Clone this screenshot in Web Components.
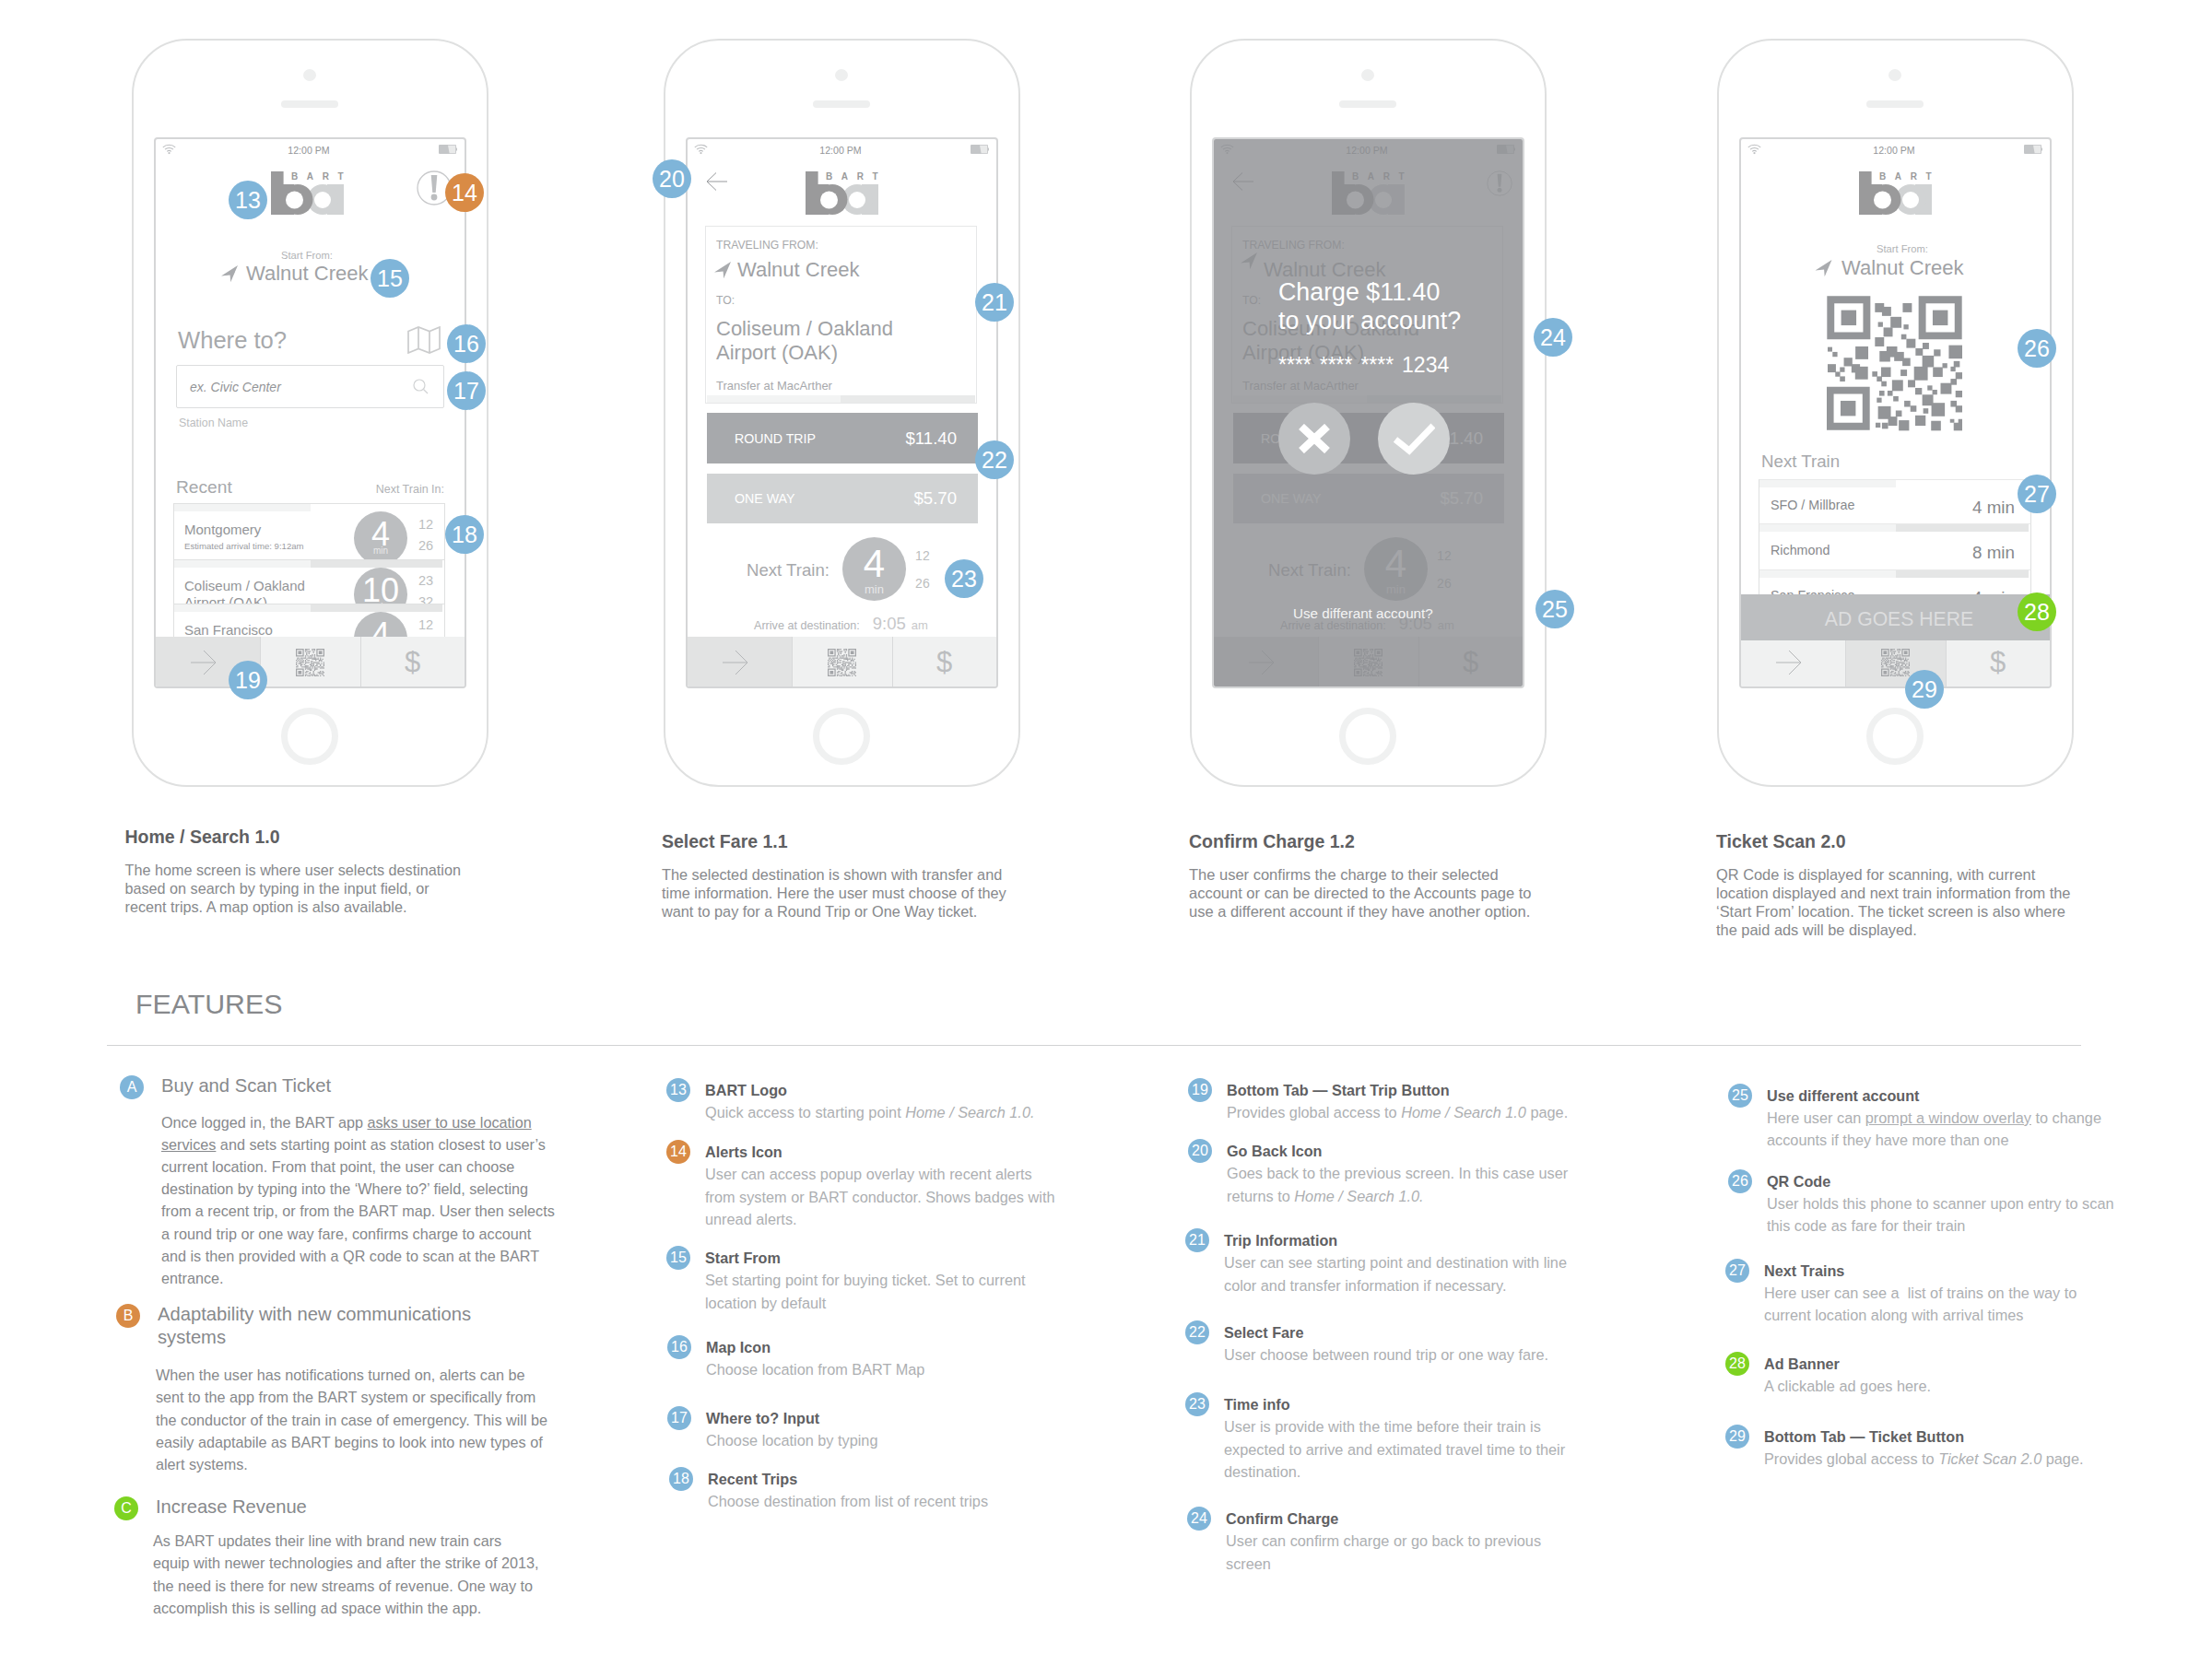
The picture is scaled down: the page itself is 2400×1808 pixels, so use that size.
<!DOCTYPE html>
<html lang="en">
<head>
<meta charset="utf-8">
<title>BART app wireframes</title>
<style>
html,body{margin:0;padding:0;background:#fff}
body{width:2400px;height:1808px;overflow:hidden;font-family:"Liberation Sans",Arial,sans-serif;color:#808285}
</style>
</head>
<body>
<wire-board></wire-board>
<script>
const FONT='"Liberation Sans",Arial,sans-serif';
function def(name, css, html){
  customElements.define(name, class extends HTMLElement{
    connectedCallback(){
      if(this.shadowRoot) return;
      const r=this.attachShadow({mode:'open'});
      r.innerHTML='<style>'+css+'</style>'+(typeof html==='function'?html(this):html);
    }
  });
}
const a=(el,n,d='')=>el.hasAttribute(n)?el.getAttribute(n):d;

/* ---------- small parts ---------- */
def('num-badge',`:host{display:flex;align-items:center;justify-content:center;width:var(--d,42px);height:var(--d,42px);border-radius:50%;background:var(--bg,#7fb5d9);color:#fff;font:var(--f,24.5px) ${FONT};flex:none;box-sizing:border-box}`,
  e=>`<slot></slot>`);
def('pin-badge',`:host{position:absolute;z-index:5;width:42px;height:42px;margin:-21px 0 0 -21px;border-radius:50%;display:flex;align-items:center;justify-content:center;color:#fff;font:25px ${FONT};background:#7fb5d9}
:host([tone=orange]){background:#d98b45}:host([tone=green]){background:#7ed321}`,`<slot></slot>`);

def('bart-logo',`:host{display:block;width:79px;height:47px;flex:none}svg{display:block}text{font:bold 10px ${FONT};letter-spacing:9.6px;fill:#9a9a9b}`,
`<svg width="79" height="47" viewBox="0 0 79 47">
<rect x="61" y="14" width="18" height="33" fill="#d1d3d4"/>
<circle cx="56" cy="30.5" r="16.5" fill="#d1d3d4"/><circle cx="56" cy="31" r="9" fill="#fff"/>
<rect x="0" y="0" width="13.6" height="47" fill="#9a9a9b"/>
<circle cx="29" cy="30.5" r="16.5" fill="#9a9a9b"/><rect x="10" y="14" width="15" height="33" fill="#9a9a9b"/><circle cx="25.5" cy="31" r="9.5" fill="#fff"/>
<text x="22" y="9">BART</text></svg>`);

def('app-status',`:host{display:flex;align-items:center;justify-content:space-between;height:24px;padding:0 8px 0 7px;box-sizing:border-box;position:relative;font:10.6px ${FONT};color:#939598}
span{transform:translate(1.5px,0)}svg{display:block}`,
`<svg width="15" height="12" viewBox="0 0 15 12" fill="none" stroke="#bcbec0" stroke-width="1.1" style="margin-top:-2px"><path d="M.8 3.8c3.6-3.4 9.8-3.4 13.4 0M3 6.2c2.4-2.2 6.6-2.2 9 0M5.2 8.4c1.2-1 3.4-1 4.6 0"/><path d="M6 10l1.5-1 1.5 1-1.5 1.2z" fill="#bcbec0" stroke="none"/></svg>
<span><slot>12:00 PM</slot></span>
<svg width="20" height="10" viewBox="0 0 20 10" style="margin-top:-2px"><path d="M1 0h17a1 1 0 0 1 1 1v2.5h1v3h-1V9a1 1 0 0 1-1 1H1a1 1 0 0 1-1-1V1a1 1 0 0 1 1-1z" fill="#c4c6c8"/><path d="M10 .8h8.2v8.4h-6.6z" fill="#e9eaea"/></svg>`);

def('nav-arrow',`:host{display:block;flex:none;width:18px;height:18px}svg{display:block}`,
`<svg width="100%" height="100%" viewBox="0 0 18 18"><path d="M18 0L0 11.6l9.6-1 .6 7.6z" fill="#a9abae"/></svg>`);
def('alert-icon',`:host{display:block;flex:none;width:var(--s,38px);height:var(--s,38px)}svg{display:block}`,
`<svg width="100%" height="100%" viewBox="0 0 38 38"><circle cx="19" cy="19" r="18" fill="none" stroke="#c8c9cb" stroke-width="1.3"/><path d="M15.7 5h6.6l-1.6 19h-3.4z" fill="#bcbec0"/><circle cx="19" cy="29" r="3.4" fill="#bcbec0"/></svg>`);
def('map-icon',`:host{display:block;flex:none;width:36px;height:30px}svg{display:block}`,
`<svg width="36" height="30" viewBox="0 0 36 30" fill="none" stroke="#cbcccd" stroke-width="1.7" stroke-linejoin="miter"><path d="M1 5.5L12 1l12 4.5L35 1v23.5L24 29l-12-4.5L1 29zM12 1v23.5M24 5.5V29"/></svg>`);
def('back-arrow',`:host{display:block;flex:none;width:24px;height:22px}svg{display:block}`,
`<svg width="24" height="22" viewBox="0 0 24 22" fill="none" stroke="#97999c" stroke-width="1"><path d="M23 11H1M11 1.500L1 11l10 9.500"/></svg>`);

const QRB=[[282,88,30,30],[305,100,30,30],[373,88,30,30],[292,150,16,16],[333,133,36,36],[310,168,30,30],[376,158,16,16],[282,200,30,30],[368,190,17,17],[385,205,30,30],[438,218,21,21],[127,232,15,15],[143,248,16,16],[218,230,42,42],[320,230,35,35],[297,245,35,35],[345,248,32,30],[372,268,26,26],[415,236,24,24],[475,240,22,22],[524,226,44,44],[437,260,38,38],[180,267,28,28],[205,288,28,28],[217,296,42,42],[127,288,27,27],[167,298,16,16],[152,313,16,16],[167,328,17,17],[273,312,17,17],[288,328,17,17],[303,344,17,17],[302,298,32,32],[366,306,21,21],[410,296,45,45],[472,298,32,32],[503,285,16,16],[530,296,16,16],[540,278,20,20],[546,315,22,22],[530,336,20,20],[338,340,36,36],[390,340,24,24],[414,366,22,22],[454,358,16,16],[470,372,16,16],[497,350,36,36],[546,375,22,22],[296,375,17,17],[323,375,17,17],[288,398,16,16],[342,393,17,17],[437,388,36,36],[378,408,20,20],[398,424,20,20],[530,408,20,20],[546,424,22,22],[292,426,42,42],[350,440,20,20],[440,433,17,17],[467,415,44,44],[325,460,30,30],[284,480,16,16],[305,480,20,20],[360,472,34,34],[414,456,34,34],[466,474,32,32],[528,468,14,12],[555,468,13,13],[540,480,28,26]];
function finder(x,y,u){return `<path fill-rule="evenodd" d="M${x} ${y}h${u}v${u}h-${u}zM${x+u*.168} ${y+u*.168}v${u*.664}h${u*.664}v-${u*.664}z"/><rect x="${x+u*.325}" y="${y+u*.325}" width="${u*.35}" height="${u*.35}"/>`}
def('qr-code',`:host{display:block;flex:none;width:147px;height:147px}svg{display:block}`,
`<svg width="147" height="147" viewBox="124 65 444 442" fill="#939598">${finder(125,65,142)}${finder(425,65,142)}${finder(123,362,142)}${QRB.map(b=>`<rect x="${b[0]}" y="${b[1]}" width="${b[2]}" height="${b[3]}"/>`).join('')}</svg>`);
function miniQR(){
  let s='',n=25,seed=7;
  const inF=(x,y)=>(x<8&&y<8)||(x>=n-8&&y<8)||(x<8&&y>=n-8);
  for(let y=0;y<n;y++)for(let x=0;x<n;x++){seed=(seed*1103515245+12345)&0x7fffffff;if(!inF(x,y)&&((seed>>16)&1))s+=`<rect x="${x}" y="${y}" width="1" height="1"/>`;}
  const f=(x,y)=>`<path fill-rule="evenodd" d="M${x} ${y}h7v7h-7zM${x+1} ${y+1}v5h5v-5z"/><rect x="${x+2}" y="${y+2}" width="3" height="3"/>`;
  return `<svg width="31" height="30" viewBox="0 0 25 25" preserveAspectRatio="none" fill="#a3a5a8">${f(0,0)}${f(18,0)}${f(0,18)}${s}</svg>`;
}
const MINI=miniQR();

def('tab-bar',`:host{display:grid;grid-template-columns:113px 109px 113px;height:54px;margin-top:auto;background:#f0f1f1;flex:none;position:relative}
div{display:flex;align-items:center;justify-content:center;box-sizing:border-box;padding-top:2px}
div+div{border-left:1.5px solid #d8d9da}
.on{background:#e2e3e3}
.one{padding-right:10px}
.two{padding-right:1.5px}
.d{font:31px ${FONT};color:#bcbec0;padding-right:1px}
svg{display:block}`,
e=>{const on=+a(e,'active','0');return `
<div class="one ${on==0?'on':''}"><svg width="28" height="28" viewBox="0 0 28 28" fill="none" stroke="#b3b5b7"><path d="M0 14h27M14 1l13 13-13 13"/></svg></div>
<div class="two ${on==1?'on':''}">${MINI}</div>
<div class="d ${on==2?'on':''}">$</div>`});

/* ---------- phone ---------- */
def('phone-frame',`:host{display:flex;flex-direction:column;align-items:center;flex:none;position:relative;width:387px;height:812px;box-sizing:border-box;border:2px solid #dfe0e0;border-radius:60px;padding-top:31px;background:#fff}
.cam{width:14px;height:13px;border-radius:50%;background:#eeefef;margin-right:1px}
.spk{width:62px;height:8px;border-radius:4px;background:#eeefef;margin:21px 1px 0 0}
.scr{margin-top:32px;width:339px;height:598px;box-sizing:border-box;border:2px solid #d5d6d7;border-radius:4px;overflow:hidden;position:relative;display:flex;flex-direction:column;background:#fff}
.home{margin:21px 1px 0 0;width:62px;height:62px;border-radius:50%;border:7px solid #f0f1f1;box-sizing:border-box}`,
`<div class="cam"></div><div class="spk"></div><div class="scr"><slot></slot></div><div class="home"></div><slot name="pins"></slot>`);

/* ---------- list rows ---------- */
const STRIPE=`.st{height:8px;background:linear-gradient(to right,#f3f4f4 0,#f3f4f4 50.5%,#e5e6e6 50.5%,#e5e6e6 99.4%,#fff 99.4%);flex:none}
:host([first]) .st{background:linear-gradient(to right,#f3f4f4 0,#f3f4f4 50.5%,#fff 50.5%)}`;
def('recent-row',`:host{display:block;overflow:hidden;box-sizing:border-box;border-left:1px solid #dfe0e0;border-right:1px solid #dfe0e0;border-top:1px solid #e0e1e1;flex:none}
${STRIPE}
.g{display:grid;grid-template-columns:184px 58px 40px;padding-left:11px}
.nm{font:15px/18px ${FONT};color:#939598;padding-top:11px;white-space:nowrap}
.sub{font:9.6px/14px ${FONT};color:#9a9c9f;margin-top:2px}
.c{width:58px;height:58px;border-radius:50%;background:#bcbec0;color:#fff;text-align:center}
.n{font:36px/30px ${FONT};padding-top:10px;color:#fff}
.m{font:10px/12px ${FONT};margin-top:-3px;color:#e8e8e9}
.t{font:14.5px/23px ${FONT};color:#bcbec0;text-align:center;padding-top:3px}`,
e=>`<div class="st"></div><div class="g"><div class="nm">${a(e,'name')}<div class="sub">${a(e,'sub')}</div></div>
<div class="c"><div class="n">${a(e,'n')}</div><div class="m">min</div></div>
<div class="t">${a(e,'t1')}<br>${a(e,'t2')}</div></div>`);
def('train-row',`:host{display:block;overflow:hidden;box-sizing:border-box;border-left:1px solid #dfe0e0;border-right:1px solid #dfe0e0;border-top:1px solid #e8e9e9;flex:none}
${STRIPE}
.g{display:flex;justify-content:space-between;align-items:flex-start;padding:var(--p,9px) 17px 0 12px}
.nm{font:14.3px/20px ${FONT};color:#87898c}
.m{font:18.8px/24px ${FONT};color:#87898c;margin-top:1px}`,
e=>`<div class="st"></div><div class="g"><div class="nm">${a(e,'name')}</div><div class="m">${a(e,'min')}</div></div>`);

/* ---------- screens ---------- */
const HEAD=`.top{display:flex;align-items:flex-start;margin-top:11px;height:47px;flex:none}
.from{font:11.2px/14px ${FONT};color:#b1b3b6}
.wc{display:flex;align-items:center;font:22px/26px ${FONT};color:#a0a2a5;gap:9px}`;
def('home-screen',`:host{display:flex;flex-direction:column;height:100%}
${HEAD}
.where{display:flex;align-items:center;justify-content:space-between;margin:44px 26px 0 24px;font:25.6px/30px ${FONT};color:#a7a9ac}
.inp{margin:12px 0 0 22px;width:291px;height:47px;box-sizing:border-box;border:1.3px solid #dcddde;border-radius:2px;display:flex;align-items:center;justify-content:space-between;padding:0 16px 0 14px;font:italic 14px ${FONT};color:#939598}
.lbl{margin:8px 0 0 25px;font:12.4px/16px ${FONT};color:#bcbec0}
.rec{margin:50px 0 0 22px;width:291px;display:flex;justify-content:space-between;align-items:baseline;font:19.2px/24px ${FONT};color:#a7a9ac}
.rec span{font:12.5px ${FONT};color:#b1b3b6}
.list{margin:5px 0 0 19px;width:295px;flex:1;min-height:0;overflow:hidden;display:flex;flex-direction:column}
svg{display:block}`,
`<app-status></app-status>
<div class="top" style="padding-left:125px"><bart-logo></bart-logo><alert-icon style="margin:-1px 0 0 79px"></alert-icon></div>
<div class="from" style="margin:37px 0 0 136px">Start From:</div>
<div class="wc" style="margin:0 0 0 71px"><nav-arrow></nav-arrow>Walnut Creek</div>
<div class="where">Where to?<map-icon></map-icon></div>
<div class="inp">ex. Civic Center<svg width="17" height="17" viewBox="0 0 17 17" fill="none" stroke="#d1d3d4" stroke-width="1.2"><circle cx="7" cy="7" r="6"/><path d="M11.500 11.500L16 16"/></svg></div>
<div class="lbl">Station Name</div>
<div class="rec">Recent<span>Next Train In:</span></div>
<div class="list">
<recent-row first style="height:61px" name="Montgomery" sub="Estimated arrival time: 9:12am" n="4" t1="12" t2="26"></recent-row>
<recent-row style="height:48px" name="Coliseum / Oakland<br>Airport (OAK)" n="10" t1="23" t2="32"></recent-row>
<recent-row style="height:60px" name="San Francisco" n="4" t1="12" t2="26"></recent-row>
</div>
<tab-bar active="0"></tab-bar>`);

def('fare-screen',`:host{display:flex;flex-direction:column;height:100%;position:relative}
${HEAD}
.card{margin:12px 0 0 19px;width:295px;height:193px;box-sizing:border-box;border:1.3px solid #e6e7e8;display:flex;flex-direction:column;font:12.2px/14px ${FONT};color:#a7a9ac}
.card>div{padding-left:11px}
.big{font:22px/26px ${FONT};color:#a0a2a5;margin-top:11px}
.st{margin:2px 1px 0;padding:0!important;height:8px;background:linear-gradient(to right,#f3f4f4 0,#f3f4f4 50%,#e9eaea 50%);flex:none}
.fare{margin-left:21px;width:294px;height:55px;box-sizing:border-box;padding:0 23px 0 30px;display:flex;justify-content:space-between;align-items:center;color:#fff;font:14.200px ${FONT};flex:none}
.fare b{font:18.600px ${FONT}}
.next{display:flex;align-items:center;margin:15px 0 0 var(--nx,64px);height:69px;flex:none;font:18.600px ${FONT};color:#a7a9ac}
.lab{padding-top:2px}
.c{margin-left:14px;width:69px;height:69px;border-radius:50%;background:#bcbec0;color:#fff;text-align:center;flex:none}
.c .n{font:42px/38px ${FONT};padding-top:10px}
.c .m{font:13px/14px ${FONT};margin-top:2px;color:#e8e8e9}
.t{margin-left:6px;width:24px;font:14px/30px ${FONT};color:#bcbec0;text-align:center}
.arr{display:flex;align-items:baseline;margin:14px 0 0 72px;font:12.600px/20px ${FONT};color:#b1b3b6;flex:none;height:20px;overflow:visible}
.arr b{font:18.500px ${FONT};color:#c7c8ca;margin-left:14px}
.arr i{font:normal 13px ${FONT};color:#c7c8ca;margin-left:6px}`,
e=>`<app-status></app-status>
<div class="top"><back-arrow style="margin:0 0 0 20px"></back-arrow><bart-logo style="margin-left:84px"></bart-logo>${e.hasAttribute('alert')?'<alert-icon style="--s:28px;margin:-1px 0 0 89px"></alert-icon>':''}</div>
<div class="card">
<div style="margin-top:13px">TRAVELING FROM:</div>
<div class="wc" style="margin-top:7px"><nav-arrow style="margin-left:-2px;transform:translateY(${a(e,'ay','0')}px)"></nav-arrow><span style="margin-left:-2px">Walnut Creek</span></div>
<div style="margin-top:13px">TO:</div>
<div class="big">Coliseum / Oakland<br>Airport (OAK)</div>
<div style="margin-top:15px;font-size:13px;line-height:16px">Transfer at MacArther</div>
<div class="st"></div>
</div>
<div class="fare" style="margin-top:10px;background:#a7a9ac"><span>ROUND TRIP</span><b>$11.40</b></div>
<div class="fare" style="margin-top:11px;height:54px;background:#d1d3d4"><span>ONE WAY</span><b>$5.70</b></div>
<div class="next" style="--nx:${a(e,'nx','64')}px"><span class="lab">Next Train:</span><div class="c"><div class="n">4</div><div class="m">min</div></div><div class="t">12<br>26</div></div>
<div class="arr">Arrive at destination:<b>9:05</b><i>am</i></div>
<tab-bar active="0"></tab-bar>
<slot></slot>`);

def('charge-overlay',`:host{position:absolute;inset:0;z-index:3;background:rgba(138,140,143,.78);display:flex;flex-direction:column;padding:151px 0 0 70px;box-sizing:border-box;color:#fff;font:26.8px/31px ${FONT}}
.num{font:23px/28px ${FONT};margin-top:18px;word-spacing:2.5px}
.btns{display:flex;gap:30px;margin-top:27px}
.b{width:78px;height:78px;border-radius:50%;display:flex;align-items:center;justify-content:center}
.use{font:15.2px/18px ${FONT};margin:142px 0 0 16px;color:#f4f4f4}
svg{display:block}`,
`<div>Charge $11.40<br>to your account?</div>
<div class="num">**** **** **** 1234</div>
<div class="btns"><div class="b" style="background:#bcbec0"><svg width="34" height="32" viewBox="0 0 34 32" fill="none" stroke="#fff" stroke-width="8.500"><path d="M3 3l28 26M31 3L3 29"/></svg></div>
<div class="b" style="background:#d1d3d4"><svg width="46" height="36" viewBox="0 0 46 36" fill="none" stroke="#fff" stroke-width="7"><path d="M3 19l15 12L44 4"/></svg></div></div>
<div class="use">Use differant account?</div>`);

def('ticket-screen',`:host{display:flex;flex-direction:column;height:100%}
${HEAD}
.title{margin:22px 0 0 22px;font:18.700px/22px ${FONT};color:#a7a9ac}
.list{margin:8px 0 0 19px;width:296px;flex:1;min-height:0;overflow:hidden;display:flex;flex-direction:column}
.ad{height:50px;flex:none;background:#bcbec0;color:#dcddde;font:21.200px/54px ${FONT};text-align:center;margin-bottom:-4px;position:relative;z-index:1;padding-left:8px;box-sizing:border-box}`,
`<app-status></app-status>
<div class="top" style="padding-left:128px"><bart-logo></bart-logo></div>
<div class="from" style="margin:30px 0 0 147px">Start From:</div>
<div class="wc" style="margin:1px 0 0 79px"><nav-arrow style="width:21px;height:18px"></nav-arrow>Walnut Creek</div>
<qr-code style="margin:17px 0 0 93px"></qr-code>
<div class="title">Next Train</div>
<div class="list">
<train-row first style="height:48px" name="SFO / Millbrae" min="4 min"></train-row>
<train-row style="height:50px;--p:10px" name="Richmond" min="8 min"></train-row>
<train-row style="height:40px" name="San Francisco" min="4 min"></train-row>
</div>
<div class="ad">AD GOES HERE</div>
<tab-bar active="1"></tab-bar>`);

/* ---------- captions and features ---------- */
def('screen-caption',`:host{display:block}
h3{margin:0;font:bold 19.5px/24px ${FONT};color:#5f6062}
p{margin:14px 0 0;font:var(--fs,16.2px)/20px ${FONT};color:#87898c;white-space:nowrap}`,
e=>`<h3>${a(e,'heading')}</h3><p><slot></slot></p>`);
def('feature-section',`:host{display:flex;align-items:flex-start}
num-badge{--d:26px;--f:16px;margin:1px 19px 0 0}
h4{margin:0;font:normal 20.2px/25px ${FONT};color:#87898c;white-space:nowrap}
p{margin:var(--gap,15px) 0 0 var(--pl,0);font:16.2px/24.2px ${FONT};color:#87898c;white-space:nowrap}`,
e=>`<num-badge style="--bg:${a(e,'color')}">${a(e,'letter')}</num-badge><div><h4>${a(e,'heading')}</h4><p><slot></slot></p></div>`);
def('feature-item',`:host{display:flex;align-items:flex-start}
num-badge{--d:26px;--f:16px;margin:-1px 16px 0 0}
.b{font:16.3px/24.2px ${FONT};color:#adafb2;white-space:nowrap}
h5{margin:0;font:bold 16.2px/24px ${FONT};color:#5f6062;white-space:nowrap}`,
e=>`<num-badge style="--bg:${a(e,'color','#7fb5d9')}">${a(e,'n')}</num-badge><div><h5>${a(e,'heading')}</h5><div class="b"><slot></slot></div></div>`);

/* ---------- board ---------- */
def('wire-board',`:host{display:block;width:2400px;height:1808px;overflow:hidden}
.phones{display:flex;padding:42px 0 0 143px}
.caps{display:grid;grid-template-columns:582.500px 572px 572px 1fr;padding-left:135.500px;margin-top:42px;height:176px;box-sizing:border-box}
.caps>*:not(:first-child){margin-top:5px}
h2{margin:0 0 0 147px;font:normal 30.3px/36px ${FONT};color:#87898c}
hr{margin:25.500px 0 0 116px;width:2142px;height:1.500px;border:0;background:#d1d3d4}
.feat{display:grid;grid-template-columns:723px 563px 586px 1fr;margin-top:30.500px}
.col{display:flex;flex-direction:column}
em{font-style:italic}`,
`<div class="phones">
<phone-frame><home-screen></home-screen>
 <pin-badge slot="pins" style="left:124px;top:173px">13</pin-badge>
 <pin-badge slot="pins" tone="orange" style="left:359px;top:165px">14</pin-badge>
 <pin-badge slot="pins" style="left:278px;top:258px">15</pin-badge>
 <pin-badge slot="pins" style="left:361px;top:329px">16</pin-badge>
 <pin-badge slot="pins" style="left:361px;top:380px">17</pin-badge>
 <pin-badge slot="pins" style="left:359px;top:536px">18</pin-badge>
 <pin-badge slot="pins" style="left:124px;top:694px">19</pin-badge>
</phone-frame>
<phone-frame style="margin-left:190px"><fare-screen></fare-screen>
 <pin-badge slot="pins" style="left:7px;top:150px">20</pin-badge>
 <pin-badge slot="pins" style="left:357px;top:284px">21</pin-badge>
 <pin-badge slot="pins" style="left:357px;top:455px">22</pin-badge>
 <pin-badge slot="pins" style="left:324px;top:584px">23</pin-badge>
</phone-frame>
<phone-frame style="margin-left:184px"><fare-screen alert nx="59" ay="-10"><charge-overlay></charge-overlay></fare-screen>
 <pin-badge slot="pins" style="left:392px;top:322px">24</pin-badge>
 <pin-badge slot="pins" style="left:394px;top:617px">25</pin-badge>
</phone-frame>
<phone-frame style="margin-left:185px"><ticket-screen></ticket-screen>
 <pin-badge slot="pins" style="left:345px;top:334px">26</pin-badge>
 <pin-badge slot="pins" style="left:345px;top:492px">27</pin-badge>
 <pin-badge slot="pins" tone="green" style="left:345px;top:620px">28</pin-badge>
 <pin-badge slot="pins" style="left:223px;top:704px">29</pin-badge>
</phone-frame>
</div>
<div class="caps">
<screen-caption heading="Home / Search 1.0">The home screen is where user selects destination<br>based on search by typing in the input field, or<br>recent trips. A map option is also available.</screen-caption>
<screen-caption style="--fs:16.3px" heading="Select Fare 1.1">The selected destination is shown with transfer and<br>time information. Here the user must choose of they<br>want to pay for a Round Trip or One Way ticket.</screen-caption>
<screen-caption style="--fs:16.5px" heading="Confirm Charge 1.2">The user confirms the charge to their selected<br>account or can be directed to the Accounts page to<br>use a different account if they have another option.</screen-caption>
<screen-caption style="--fs:16.4px" heading="Ticket Scan 2.0">QR Code is displayed for scanning, with current<br>location displayed and next train information from the<br>‘Start From’ location. The ticket screen is also where<br>the paid ads will be displayed.</screen-caption>
</div>
<h2>FEATURES</h2>
<hr>
<div class="feat">
<div class="col">
<feature-section style="margin-left:130px" letter="A" color="#7fb5d9" heading="Buy and Scan Ticket">Once logged in, the BART app <u>asks user to use location</u><br><u>services</u> and sets starting point as station closest to user’s<br>current location. From that point, the user can choose<br>destination by typing into the ‘Where to?’ field, selecting<br>from a recent trip, or from the BART map. User then selects<br>a round trip or one way fare, confirms charge to account<br>and is then provided with a QR code to scan at the BART<br>entrance.</feature-section>
<feature-section style="margin:15px 0 0 126px;--gap:16px;--pl:-2px" letter="B" color="#d98b45" heading="Adaptability with new communications<br>systems">When the user has notifications turned on, alerts can be<br>sent to the app from the BART system or specifically from<br>the conductor of the train in case of emergency. This will be<br>easily adaptabile as BART begins to look into new types of<br>alert systems.</feature-section>
<feature-section style="margin:22px 0 0 124px;--gap:12px;--pl:-3px" letter="C" color="#7ed321" heading="Increase Revenue">As BART updates their line with brand new train cars<br>equip with newer technologies and after the strike of 2013,<br>the need is there for new streams of revenue. One way to<br>accomplish this is selling ad space within the app.</feature-section>
</div>
<div class="col" style="padding-top:5.700px">
<feature-item n="13" heading="BART Logo">Quick access to starting point <em>Home / Search 1.0.</em></feature-item>
<feature-item n="14" color="#d98b45" style="margin-top:19px" heading="Alerts Icon">User can access popup overlay with recent alerts<br>from system or BART conductor. Shows badges with<br>unread alerts.</feature-item>
<feature-item n="15" style="margin-top:18.400px" heading="Start From">Set starting point for buying ticket. Set to current<br>location by default</feature-item>
<feature-item n="16" style="margin:24.600px 0 0 1px" heading="Map Icon">Choose location from BART Map</feature-item>
<feature-item n="17" style="margin:28.400px 0 0 1px" heading="Where to? Input">Choose location by typing</feature-item>
<feature-item n="18" style="margin:18.200px 0 0 3px" heading="Recent Trips">Choose destination from list of recent trips</feature-item>
</div>
<div class="col" style="padding-top:5.700px">
<feature-item n="19" style="margin-left:3px" heading="Bottom Tab — Start Trip Button">Provides global access to <em>Home / Search 1.0</em> page.</feature-item>
<feature-item n="20" style="margin:18px 0 0 3px" heading="Go Back Icon">Goes back to the previous screen. In this case user<br>returns to <em>Home / Search 1.0.</em></feature-item>
<feature-item n="21" style="margin-top:24.600px" heading="Trip Information">User can see starting point and destination with line<br>color and transfer information if necessary.</feature-item>
<feature-item n="22" style="margin-top:27.600px" heading="Select Fare">User choose between round trip or one way fare.</feature-item>
<feature-item n="23" style="margin-top:29.800px" heading="Time info">User is provide with the time before their train is<br>expected to arrive and extimated travel time to their<br>destination.</feature-item>
<feature-item n="24" style="margin:27.400px 0 0 2px" heading="Confirm Charge">User can confirm charge or go back to previous<br>screen</feature-item>
</div>
<div class="col" style="padding-top:11.400px">
<feature-item n="25" style="margin-left:3px" heading="Use different account">Here user can <u>prompt a window overlay</u> to change<br>accounts if they have more than one</feature-item>
<feature-item n="26" style="margin:20.600px 0 0 3px" heading="QR Code">User holds this phone to scanner upon entry to scan<br>this code as fare for their train</feature-item>
<feature-item n="27" style="margin-top:24.600px" heading="Next Trains">Here user can see a&nbsp; list of trains on the way to<br>current location along with arrival times</feature-item>
<feature-item n="28" color="#7ed321" style="margin-top:28.700px" heading="Ad Banner">A clickable ad goes here.</feature-item>
<feature-item n="29" style="margin-top:31.300px" heading="Bottom Tab — Ticket Button">Provides global access to <em>Ticket Scan 2.0</em> page.</feature-item>
</div>
</div>`);
</script>
</body>
</html>
